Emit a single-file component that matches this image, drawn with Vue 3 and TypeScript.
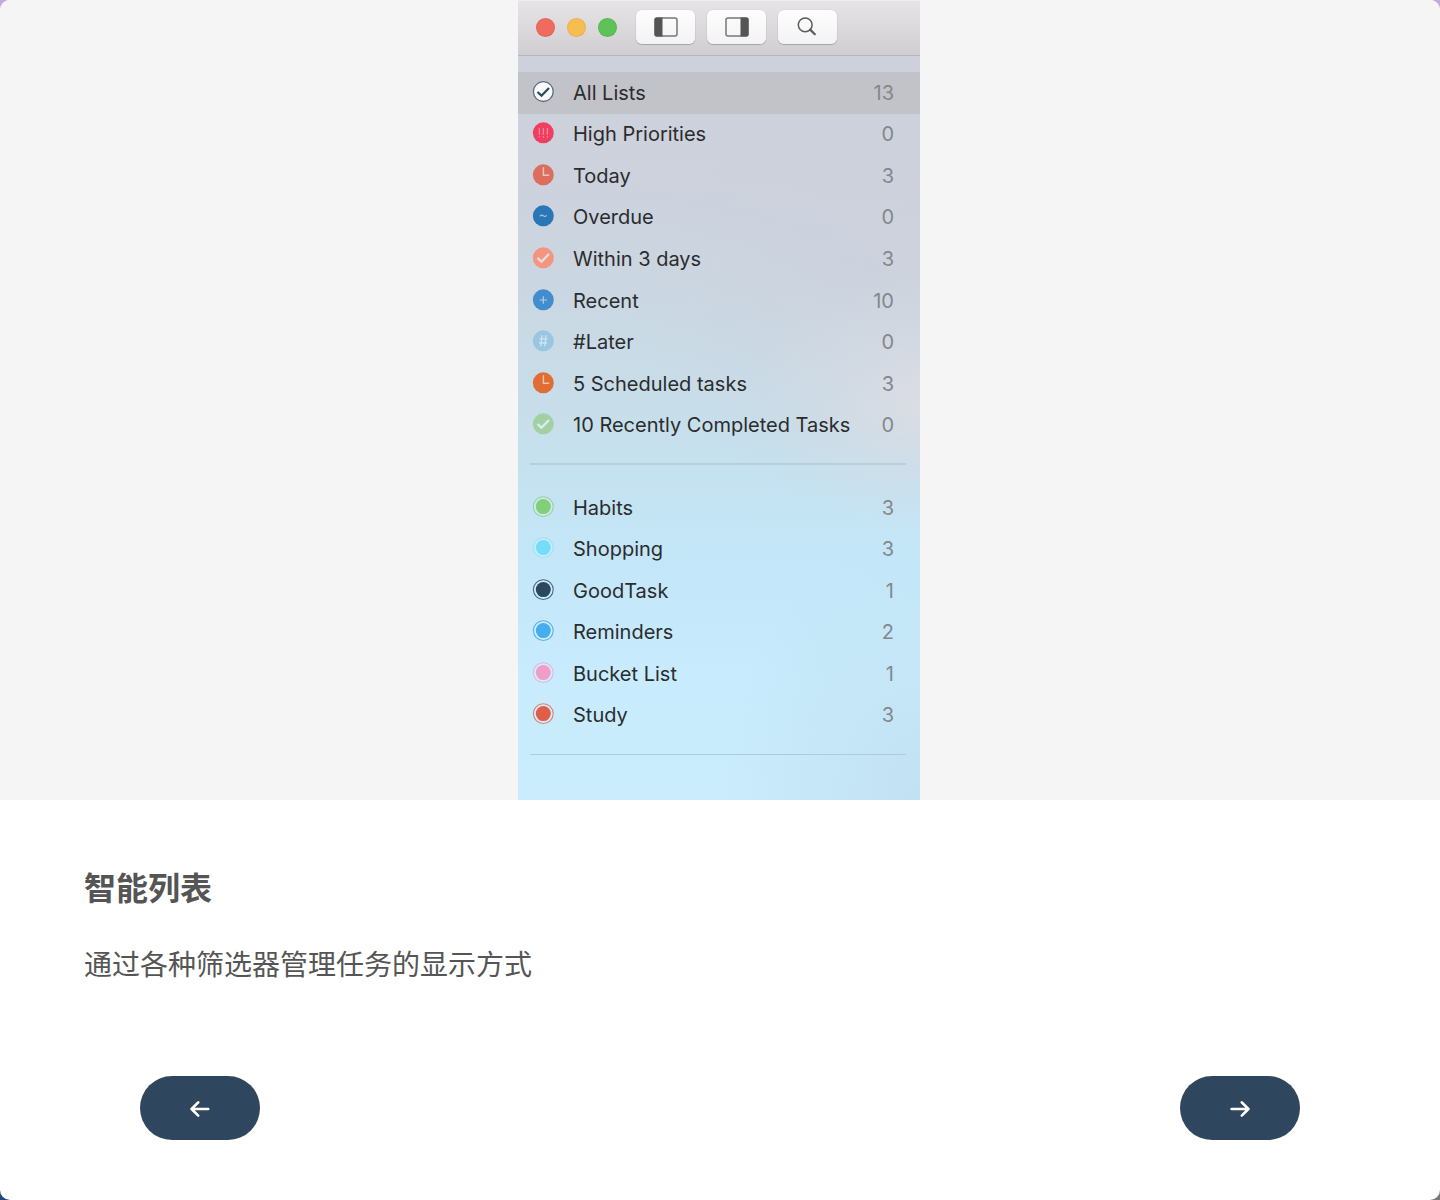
<script setup lang="ts">
import { ref } from 'vue'

type Glyph = 'check' | 'bangs' | 'clock' | 'tilde' | 'plus' | 'hash'

interface SmartList {
  name: string
  count: number
  glyph: Glyph
  fill: string
  stroke: string
}

interface TaskList {
  name: string
  count: number
  color: string
  ring: number
}

const smartLists: SmartList[] = [
  { name: 'All Lists', count: 13, glyph: 'check', fill: '#fafbfc', stroke: '#2c4a66' },
  { name: 'High Priorities', count: 0, glyph: 'bangs', fill: '#f03e5f', stroke: '#f79bb0' },
  { name: 'Today', count: 3, glyph: 'clock', fill: '#dd6e5e', stroke: '#efc4c0' },
  { name: 'Overdue', count: 0, glyph: 'tilde', fill: '#2977b5', stroke: '#a3c6e2' },
  { name: 'Within 3 days', count: 3, glyph: 'check', fill: '#f4957f', stroke: '#e6dfe2' },
  { name: 'Recent', count: 10, glyph: 'plus', fill: '#428dcd', stroke: '#b0d0ea' },
  { name: '#Later', count: 0, glyph: 'hash', fill: '#99c6e0', stroke: '#cfe4f1' },
  { name: '5 Scheduled tasks', count: 3, glyph: 'clock', fill: '#e06d34', stroke: '#f2c5ac' },
  { name: '10 Recently Completed Tasks', count: 0, glyph: 'check', fill: '#a2d0a2', stroke: '#dcecf2' },
]

const taskLists: TaskList[] = [
  { name: 'Habits', count: 3, color: '#82cf79', ring: 0.75 },
  { name: 'Shopping', count: 3, color: '#74defa', ring: 0.55 },
  { name: 'GoodTask', count: 1, color: '#2b4860', ring: 0.8 },
  { name: 'Reminders', count: 2, color: '#46adf0', ring: 0.9 },
  { name: 'Bucket List', count: 1, color: '#f09dca', ring: 0.7 },
  { name: 'Study', count: 3, color: '#e05d48', ring: 0.75 },
]

const selected = ref('All Lists')
</script>

<template>
  <div class="backdrop">
    <main class="card">
      <section class="hero">
        <div class="window">
          <header class="titlebar">
            <div class="lights">
              <span class="light red"></span>
              <span class="light yellow"></span>
              <span class="light green"></span>
            </div>
            <div class="tools">
              <button class="tool" type="button" aria-label="Left sidebar">
                <svg width="24" height="20" viewBox="0 0 24 20">
                  <rect x="1" y="1" width="22" height="18" rx="2" fill="none" stroke="#777" stroke-width="1.5" />
                  <path d="M2.5 0.5H8.5V19.5H2.5a2 2 0 0 1-2-2v-15a2 2 0 0 1 2-2z" fill="#555" />
                </svg>
              </button>
              <button class="tool" type="button" aria-label="Right sidebar">
                <svg width="24" height="20" viewBox="0 0 24 20">
                  <rect x="1" y="1" width="22" height="18" rx="2" fill="none" stroke="#777" stroke-width="1.5" />
                  <path d="M21.5 0.5H15.5V19.5H21.5a2 2 0 0 0 2-2v-15a2 2 0 0 0-2-2z" fill="#555" />
                </svg>
              </button>
              <button class="tool" type="button" aria-label="Search">
                <svg width="22" height="20" viewBox="0 0 22 20" fill="none" stroke="#5c5c5c">
                  <circle cx="8.2" cy="7.8" r="6.9" stroke-width="1.5" />
                  <path d="M13.2 12.6L17.8 17.2" stroke-width="2.2" stroke-linecap="round" />
                </svg>
              </button>
            </div>
          </header>

          <nav class="lists">
            <ul class="group smart">
              <li v-for="item in smartLists" :key="item.name">
                <a
                  class="row"
                  :class="{ active: item.name === selected }"
                  href="#"
                  @click.prevent="selected = item.name"
                >
                  <svg class="icon" width="22" height="22" viewBox="0 0 22 22" fill="none" :stroke="item.stroke">
                    <circle v-if="item.name === 'All Lists'" cx="11.3" cy="10.6" r="9.9" :fill="item.fill" stroke="#5c6e82" stroke-width="1.3" />
                    <circle v-else cx="11.3" cy="10.8" r="10.5" :fill="item.fill" stroke="none" />
                    <path v-if="item.glyph === 'check'" d="M5.5 11L9.5 14.7L17 7" stroke-width="2.3" />
                    <path v-else-if="item.glyph === 'bangs'" d="M7.3 6v6.8M11.3 6v6.8M15.3 6v6.8M7.3 14.2v1.4M11.3 14.2v1.4M15.3 14.2v1.4" />
                    <path v-else-if="item.glyph === 'clock'" d="M11.4 3.2V11.2H17.2" stroke-width="1.4" />
                    <path v-else-if="item.glyph === 'tilde'" d="M8 11.4c.8-1.5 2-1.5 3.3-.6s2.5.9 3.3-.6" stroke-width="1.2" />
                    <path v-else-if="item.glyph === 'plus'" d="M11.3 7.3V14.7M7.6 11H15" stroke-width="1.2" />
                    <path v-else d="M10 5.2L8.8 16.4M14 5.2L12.8 16.4M7.5 8.8h8M7 13h8" stroke-width="1.3" />
                  </svg>
                  <span class="name">{{ item.name }}</span>
                  <span class="count">{{ item.count }}</span>
                </a>
              </li>
            </ul>
            <hr class="divider" />
            <ul class="group own">
              <li v-for="item in taskLists" :key="item.name">
                <a
                  class="row"
                  :class="{ active: item.name === selected }"
                  href="#"
                  @click.prevent="selected = item.name"
                >
                  <svg class="icon" width="22" height="22" viewBox="0 0 22 22">
                    <circle cx="11.3" cy="10.6" r="9.9" fill="#fff" fill-opacity="0.18" :stroke="item.color" :stroke-opacity="item.ring" stroke-width="1.1" />
                    <circle cx="11.3" cy="10.6" r="7.5" :fill="item.color" />
                  </svg>
                  <span class="name">{{ item.name }}</span>
                  <span class="count">{{ item.count }}</span>
                </a>
              </li>
            </ul>
            <hr class="divider" />
          </nav>
        </div>
      </section>

      <section class="caption">
        <h1>智能列表</h1>
        <p>通过各种筛选器管理任务的显示方式</p>
      </section>

      <footer class="pager">
        <button class="page" type="button" aria-label="上一页">
          <svg width="20" height="18" viewBox="0 0 20 18">
            <path d="M8.2 2.4L1.6 9L8.2 15.6M2.2 9H18.2" />
          </svg>
        </button>
        <button class="page" type="button" aria-label="下一页">
          <svg width="20" height="18" viewBox="0 0 20 18">
            <path d="M11.8 2.4L18.4 9L11.8 15.6M17.8 9H1.6" />
          </svg>
        </button>
      </footer>
    </main>
  </div>
</template>

<style scoped>
.backdrop {
  min-height: 100vh;
  display: flex;
  background:
    linear-gradient(90deg, #1f4a80 50%, #77787c 50%) bottom / 100% 50% no-repeat,
    #c3aadb;
}

.card {
  flex: 1;
  display: flex;
  flex-direction: column;
  overflow: hidden;
  border-radius: 10px;
  background: #fff;
  color: #555;
  font-family: "Noto Sans CJK SC", sans-serif;
}

.hero {
  display: flex;
  justify-content: center;
  padding-right: 2px;
  background: #f5f5f5;
}

.window {
  width: 402px;
  max-width: 100%;
  font-family: Inter, "Liberation Sans", sans-serif;
  background:
    radial-gradient(ellipse 170px 130px at 100% 400px, rgba(222, 221, 227, 0.85), rgba(220, 221, 228, 0.3) 55%, rgba(220, 221, 228, 0) 100%),
    radial-gradient(ellipse 300px 260px at 100% 260px, rgba(206, 209, 220, 0.8), rgba(206, 209, 220, 0) 100%),
    radial-gradient(ellipse 200px 260px at 100% 800px, rgba(192, 223, 241, 0.8), rgba(192, 223, 241, 0) 100%),
    linear-gradient(180deg, #cdd1dc 56px, #cdd2dd 180px, #cad7e2 290px, #c7dfeb 420px, #c5e2f0 480px, #c3e7f8 560px, #c8ecfd 680px, #caecfc 800px);
}

.titlebar {
  display: flex;
  align-items: center;
  height: 56px;
  box-sizing: border-box;
  padding: 0 18px 2px;
  gap: 19px;
  border-top: 1px solid #efedef;
  border-bottom: 1px solid #b7b5ba;
  background: linear-gradient(#e6e4e6, #d0ced1);
}

.lights {
  display: flex;
  gap: 12px;
}

.light {
  width: 19px;
  height: 19px;
  border-radius: 50%;
  box-shadow: inset 0 0 0 1px rgba(0, 0, 0, 0.06);
}

.red {
  background: #ef6b5e;
}

.yellow {
  background: #f6be50;
}

.green {
  background: #5dc257;
}

.tools {
  display: flex;
  gap: 12px;
}

.tool {
  display: flex;
  align-items: center;
  justify-content: center;
  width: 59px;
  height: 34px;
  padding: 0;
  border: 0;
  border-radius: 6px;
  background: linear-gradient(#fdfdfd, #f3f3f3);
  box-shadow: 0 1px 1px rgba(0, 0, 0, 0.2), 0 0 1px rgba(0, 0, 0, 0.2);
}

.lists {
  padding: 16px 0 45px;
}

.group {
  display: grid;
  grid-auto-rows: 1fr;
  margin: 0;
  padding: 0;
  list-style: none;
}

.smart {
  height: 374px;
}

.own {
  height: 249px;
}

.row {
  display: flex;
  align-items: center;
  height: 100%;
  box-sizing: border-box;
  padding: 0 26px 0 14px;
  color: #2b2c2e;
  font-size: 20px;
  line-height: 24px;
  text-decoration: none;
}

.row.active {
  background: #c2c3c8;
}

.icon {
  flex: none;
  margin: 0 19px 2px 0;
}

.name {
  flex: 1;
  white-space: nowrap;
}

.count {
  color: #85878b;
}

.divider {
  height: 2px;
  margin: 17px 14px 22px 12px;
  border: 0;
  background: #b7cfdb;
}

.own + .divider {
  height: 1px;
  margin: 18px 14px 0 12px;
  background: #adcbd8;
}

.caption {
  padding: 62px 84px 0;
}

.caption h1 {
  margin: 0;
  font-size: 32px;
  line-height: 48px;
  font-weight: 700;
}

.caption p {
  margin: 33px 0 0;
  font-size: 28px;
  line-height: 40px;
}

.pager {
  display: flex;
  justify-content: space-between;
  padding: 93px 140px 60px;
}

.page {
  display: flex;
  align-items: center;
  justify-content: center;
  width: 120px;
  height: 64px;
  padding: 2px 0 0;
  border: 0;
  border-radius: 32px;
  background: #2e465e;
  cursor: pointer;
}

.page path {
  fill: none;
  stroke: #fff;
  stroke-width: 2.6;
  stroke-linecap: round;
  stroke-linejoin: round;
}
</style>

<style>
body {
  margin: 0;
}
</style>
